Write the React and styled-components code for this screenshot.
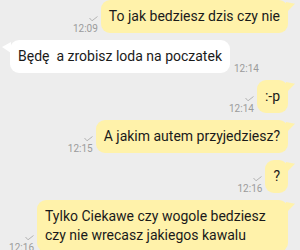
import React from 'react';
import styled, { createGlobalStyle } from 'styled-components';

const GlobalStyle = createGlobalStyle`
    html, body {
        margin: 0;
        padding: 0;
        background: #ededed;
        font-family: Roboto, "Noto Sans", Arial, sans-serif;
        overflow: hidden;
    }
`;

const messages = [
    { id: 1, mine: true, text: 'To jak bedziesz dzis czy nie', time: '12:09' },
    { id: 2, mine: false, text: 'Będę  a zrobisz loda na poczatek', time: '12:14' },
    { id: 3, mine: true, text: ':-p', time: '12:14' },
    { id: 4, mine: true, text: 'A jakim autem przyjedziesz?', time: '12:15' },
    { id: 5, mine: true, text: '?', time: '12:16' },
    { id: 6, mine: true, text: 'Tylko Ciekawe czy wogole bedziesz czy nie wrecasz jakiegos kawalu', time: '12:16' },
];

const Check = () => (
    <svg width="9" height="6" viewBox="0 0 9 6">
        <polyline points="0.5,2 3,4.8 8.5,0.5" fill="none" stroke="#b4b4b4" strokeWidth="1" />
    </svg>
);

export default function App() {
    return (
        <>
            <GlobalStyle />
            <Chat>
                {messages.map((m) => (
                    <Row key={m.id} mine={m.mine}>
                        {m.mine && (
                            <Meta>
                                <Check />
                                <Time>{m.time}</Time>
                            </Meta>
                        )}
                        <Bubble mine={m.mine}>{m.text}</Bubble>
                        {!m.mine && (
                            <Meta>
                                <Time>{m.time}</Time>
                            </Meta>
                        )}
                    </Row>
                ))}
            </Chat>
        </>
    );
}

const Chat = styled.div`
    display: flex;
    flex-direction: column;
    gap: 7px;
    width: 300px;
`;

const Row = styled.div`
    display: flex;
    align-items: flex-end;
    justify-content: ${({ mine }) => (mine ? 'flex-end' : 'flex-start')};
    gap: ${({ mine }) => (mine ? '3px' : '4px')};
    padding: ${({ mine }) => (mine ? '0 12px 0 0' : '0 0 0 10px')};
`;

const Bubble = styled.div`
    position: relative;
    max-width: 235px;
    padding: 7px 8px;
    border-radius: 9px;
    font-size: 14px;
    line-height: 19px;
    white-space: pre-wrap;
    color: #1a1a1a;
    background: ${({ mine }) => (mine ? '#fff2aa' : '#ffffff')};

    &::after {
        content: '';
        position: absolute;
        top: 2px;
        width: 9px;
        height: 11px;
        background: inherit;
        ${({ mine }) => mine
            ? 'right: -7px; clip-path: polygon(0 0, 100% 15%, 0 100%);'
            : 'left: -8px; clip-path: polygon(100% 0, 0 45%, 100% 100%);'}
    }
`;

const Meta = styled.div`
    display: flex;
    flex-direction: column;
    align-items: flex-end;
    gap: 1px;
    margin-bottom: -2px;
`;

const Time = styled.span`
    font-size: 10px;
    line-height: 12px;
    color: #9b9b9b;
`;
